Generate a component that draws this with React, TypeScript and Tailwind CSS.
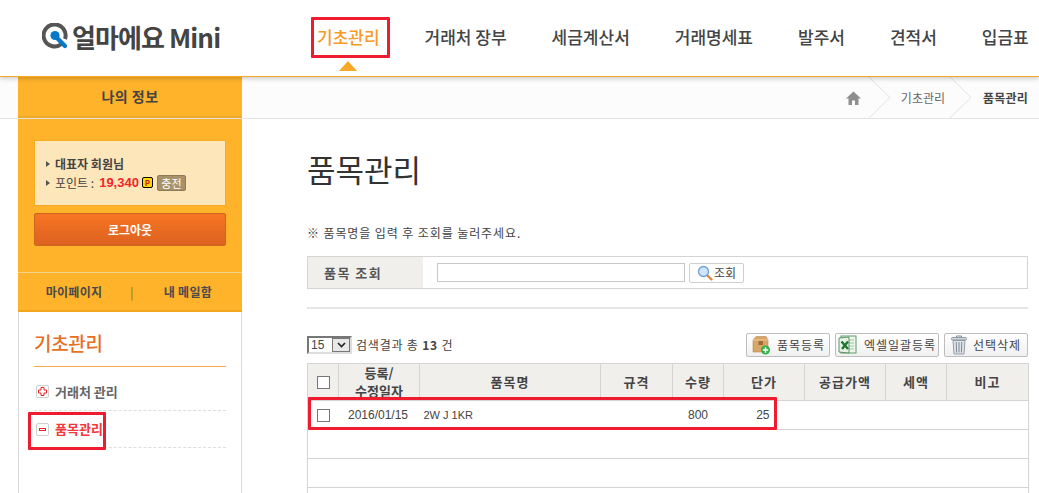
import React from 'react';

const navItems = ['거래처 장부', '세금계산서', '거래명세표', '발주서', '견적서', '입금표'];

const Chevron: React.FC = () => (
  <svg width="23" height="41" viewBox="0 0 23 41" className="shrink-0">
    <path d="M1 0 L22 20.5 L1 41" fill="none" stroke="#e2e2e2" strokeWidth="1" />
  </svg>
);

const Arrow: React.FC = () => (
  <span className="mr-[5px] inline-block h-0 w-0 border-y-[3px] border-l-[4px] border-y-transparent border-l-[#555]" />
);

const PackageIcon: React.FC = () => (
  <svg width="20" height="20" viewBox="0 0 20 20" className="shrink-0">
    <path d="M2 5 L5 1.5 H15 L17 5 V17 H2 Z" fill="#d9a566" stroke="#b98a50" strokeWidth="0.6" />
    <path d="M2 5 H17" stroke="#efc894" strokeWidth="1" />
    <rect x="7.5" y="6" width="4.5" height="4" fill="#9b6d3a" />
    <circle cx="14.5" cy="15" r="4.5" fill="#2fb344" />
    <path d="M14.5 12.3 V17.7 M11.8 15 H17.2" stroke="#fff" strokeWidth="1.6" />
  </svg>
);

const ExcelIcon: React.FC = () => (
  <svg width="20" height="20" viewBox="0 0 20 20" className="shrink-0">
    <rect x="3" y="1" width="15" height="17" fill="#eef6ee" stroke="#5f9c6a" />
    <path d="M10 5 H16 M10 8 H16 M10 11 H16 M10 14 H16" stroke="#9cc6a4" strokeWidth="1" />
    <path d="M1 3 L11 2 V18 L1 17 Z" fill="#e9f2e6" stroke="#3f7f45" strokeWidth="0.8" />
    <path d="M3.5 6.5 L10 14 M10 6.5 L4 14" stroke="#1f7a2e" strokeWidth="2.4" />
  </svg>
);

const TrashIcon: React.FC = () => (
  <svg width="16" height="20" viewBox="0 0 16 20" className="shrink-0">
    <path d="M5.5 2 V1 H10.5 V2" fill="none" stroke="#7d8894" strokeWidth="1" />
    <rect x="0.5" y="2.5" width="15" height="2.5" rx="1" fill="#cfd6dc" stroke="#7d8894" strokeWidth="0.8" />
    <path d="M2 5.5 H14 L13 19 H3 Z" fill="#dfe4e8" stroke="#7d8894" strokeWidth="0.8" />
    <path d="M5.2 7 L5.6 17.5 M8 7 V17.5 M10.8 7 L10.4 17.5" stroke="#7d8894" strokeWidth="1" />
  </svg>
);

const SearchIcon: React.FC = () => (
  <svg width="16" height="16" viewBox="0 0 16 16" className="shrink-0">
    <path d="M9.5 9.5 L14.5 14.5" stroke="#d9893a" strokeWidth="2.4" strokeLinecap="round" />
    <circle cx="6.5" cy="6.5" r="5" fill="#cfe5fa" stroke="#6f9fd0" strokeWidth="1.3" />
  </svg>
);

const LogoIcon: React.FC = () => (
  <svg width="27" height="27" viewBox="0 0 27 27" className="shrink-0">
    <path d="M19.5 21 A11 11 0 1 1 23 16" fill="none" stroke="#555" strokeWidth="4" />
    <circle cx="13" cy="12.5" r="4.6" fill="#0a78c8" />
    <path d="M16 16 L23 23" stroke="#0a78c8" strokeWidth="4.4" strokeLinecap="round" />
  </svg>
);

const ActionButton: React.FC<{ icon: React.ReactNode; label: string; width: string }> = ({ icon, label, width }) => (
  <button className={`flex h-[24px] items-center justify-center gap-[6px] rounded-[2px] border border-[#bdbdbd] bg-gradient-to-b from-white to-[#f0f0f0] text-[12px] tracking-[1px] text-[#444] ${width}`}>
    {icon}
    {label}
  </button>
);

const Sidebar: React.FC = () => (
  <aside className="flex w-[224px] shrink-0 flex-col">
    <div className="flex h-[153px] flex-col bg-[#ffb32a] px-[16px] pt-[21px]">
      <div className="flex h-[66px] flex-col justify-center gap-[1px] border border-[#f6ab23] bg-[#fee6bb] px-[11px] text-[12px] leading-[18px] text-[#444]">
        <div className="flex items-center font-bold">
          <Arrow />
          대표자 회원님
        </div>
        <div className="flex items-center">
          <Arrow />
          포인트 :
          <span className="ml-[5px] font-['Liberation_Sans',sans-serif] text-[13px] font-bold text-[#f0282d]">19,340</span>
          <span className="ml-[3px] flex h-[11px] w-[11px] items-center justify-center rounded-[2px] border border-black bg-[#ffd800] text-[8px] font-bold leading-none text-[#d02020]">P</span>
          <span className="ml-[4px] flex h-[16px] w-[29px] items-center justify-center rounded-[2px] border border-[#8d7a58] bg-[#a8926c] text-[11px] text-white">충전</span>
        </div>
      </div>
      <button className="mt-[7px] h-[33px] shrink-0 rounded-[2px] border border-[#cf6420] bg-gradient-to-b from-[#f87524] to-[#dc6220] text-[12px] font-bold text-white">
        로그아웃
      </button>
    </div>
    <div className="flex h-[40px] shrink-0 items-center border-t border-t-[#f3d28a] border-b-[2px] border-b-[#f2a51f] bg-[#ffb32a] text-[12px] font-bold tracking-[0.3px] text-[#4a4a4a]">
      <span className="w-[112px] text-center">마이페이지</span>
      <span className="text-[#a98436]">|</span>
      <span className="flex-1 text-center">내 메일함</span>
    </div>
    <div className="flex flex-1 flex-col border-x border-[#d9d9d9] bg-white px-[15px] pt-[16px]">
      <h2 className="border-b border-[#f6a84a] pb-[8px] text-[19px] leading-[30px] font-medium tracking-[-0.3px] text-[#e5701f]">기초관리</h2>
      <div className="flex h-[44px] items-center gap-[6px] border-b border-dashed border-[#dedede] pl-[2px] pt-[6px] text-[13px] font-bold text-[#666]">
        <span className="flex h-[13px] w-[13px] items-center justify-center rounded-[2px] border border-[#cfcfcf]">
          <svg width="9" height="9" viewBox="0 0 9 9">
            <path d="M3 0.5 H6 V3 H8.5 V6 H6 V8.5 H3 V6 H0.5 V3 H3 Z" fill="none" stroke="#e8232a" strokeWidth="1" />
          </svg>
        </span>
        거래처 관리
      </div>
      <div className="flex h-[37px] items-center gap-[6px] border-b border-dashed border-[#dedede] pl-[2px] text-[13px] font-bold text-[#f0383d]">
        <span className="flex h-[13px] w-[13px] items-center justify-center rounded-[2px] border border-[#cfcfcf]">
          <span className="h-[3px] w-[7px] border border-[#e8232a]" />
        </span>
        품목관리
      </div>
    </div>
  </aside>
);

const DataTable: React.FC = () => {
  const headers = ['등록/', '품목명', '규격', '수량', '단가', '공급가액', '세액', '비고'];
  return (
    <table className="w-[721px] table-fixed border-collapse text-[12px] text-[#444]">
      <colgroup>
        <col className="w-[31px]" />
        <col className="w-[81px]" />
        <col className="w-[181px]" />
        <col className="w-[72px]" />
        <col className="w-[51px]" />
        <col className="w-[81px]" />
        <col className="w-[81px]" />
        <col className="w-[61px]" />
        <col className="w-[82px]" />
      </colgroup>
      <thead>
        <tr className="h-[37px] bg-[#f0efec] text-[13px] font-bold text-[#444]">
          <th className="border border-[#d4d4d4]">
            <span className="mx-auto block h-[13px] w-[13px] border border-[#777] bg-white" />
          </th>
          <th className="border border-[#d4d4d4] text-[13px] leading-[18px] font-bold">
            {headers[0]}
            <br />
            수정일자
          </th>
          {headers.slice(1).map((h) => (
            <th key={h} className="border border-[#d4d4d4] font-bold tracking-[1px]">{h}</th>
          ))}
        </tr>
      </thead>
      <tbody>
        <tr className="h-[29px]">
          <td className="border-y border-l border-[#d4d4d4]">
            <span className="mx-auto block h-[13px] w-[13px] border border-[#777] bg-white" />
          </td>
          <td className="border-y border-[#d4d4d4] pr-[2px] text-center font-['Liberation_Sans',sans-serif]">2016/01/15</td>
          <td className="border-y border-[#d4d4d4] pl-[4px] font-['Liberation_Sans',sans-serif] text-[11px]">2W J 1KR</td>
          <td className="border-y border-[#d4d4d4]" />
          <td className="border-y border-[#d4d4d4] text-center font-['Liberation_Sans',sans-serif]">800</td>
          <td className="border-y border-[#d4d4d4] pr-[35px] text-right font-['Liberation_Sans',sans-serif]">25</td>
          <td className="border-y border-[#d4d4d4]" />
          <td className="border-y border-[#d4d4d4]" />
          <td className="border-y border-r border-[#d4d4d4]" />
        </tr>
        {[0, 1, 2].map((r) => (
          <tr key={r} className="h-[29px]">
            <td colSpan={9} className="border border-[#d4d4d4]" />
          </tr>
        ))}
      </tbody>
    </table>
  );
};

const App: React.FC = () => {
  return (
    <div className="relative h-[493px] w-[1039px] overflow-hidden bg-white font-['Noto_Sans_CJK_KR','Noto_Sans',sans-serif] text-[#444]">
      <header className="relative z-10 flex h-[77px] items-center border-b border-[#f9a825] bg-white shadow-[0_2px_4px_rgba(0,0,0,0.18)]">
        <div className="flex w-[317px] items-center gap-[3px] pl-[42px] pb-[3px]">
          <LogoIcon />
          <span className="text-[26px] leading-none font-bold tracking-[-0.9px] whitespace-nowrap text-[#444]">얼마에요 Mini</span>
        </div>
        <nav className="flex items-center gap-[45px] pb-[3px] text-[17px] font-medium whitespace-nowrap text-[#444]">
          <span className="relative text-[#f89a2a]">
            기초관리
            <span className="absolute top-[37px] left-[22px] h-0 w-0 border-x-[9px] border-b-[10px] border-x-transparent border-b-[#f9a825]" />
          </span>
          {navItems.map((item) => (
            <span key={item}>{item}</span>
          ))}
        </nav>
      </header>

      <div className="flex h-[42px] border-b border-[#e3e3e3] bg-[#fcfcfc]">
        <div className="w-[18px]" />
        <div className="flex w-[224px] items-center justify-center border-b-[2px] border-[#eda828] bg-[#ffb32a] text-[14px] font-bold tracking-[0.5px] text-[#444]">
          나의 정보
        </div>
        <div className="flex flex-1 items-center justify-end pr-[11px] text-[12px]">
          <svg width="15" height="14" viewBox="0 0 15 14" className="mr-[7px] shrink-0">
            <path d="M7.5 0.5 L15 7.5 H12.5 V14 H9 V9.5 H6 V14 H2.5 V7.5 H0 Z" fill="#8f8f8f" />
          </svg>
          <Chevron />
          <span className="mr-[4px] ml-[10px] text-[#666]">기초관리</span>
          <Chevron />
          <span className="ml-[11px] font-bold tracking-[0.2px] text-[#444]">품목관리</span>
        </div>
      </div>

      <div className="flex pl-[18px]">
        <Sidebar />
        <main className="flex flex-1 flex-col pt-[28px] pl-[65px]">
          <h1 className="text-[31px] leading-[44px] font-normal text-[#333]">품목관리</h1>
          <p className="mt-[33px] text-[12px] leading-[18px] tracking-[0.9px] text-[#444]">※ 품목명을 입력 후 조회를 눌러주세요.</p>
          <div className="mt-[14px] flex h-[33px] w-[721px] items-center border border-[#d4d4d4]">
            <div className="flex h-full w-[115px] items-center bg-[#f0efec] pl-[16px] text-[13px] font-bold tracking-[1.5px] text-[#555]">
              품목 조회
            </div>
            <input className="ml-[14px] h-[19px] w-[248px] border border-[#c8c8c8] bg-white" />
            <button className="ml-[4px] flex h-[20px] w-[55px] items-center justify-center gap-[1px] rounded-[2px] border border-[#cfcfcf] bg-white text-[12px] text-[#444]">
              <SearchIcon />
              조회
            </button>
          </div>
          <div className="mt-[18px] h-[2px] w-[721px] bg-[#e5e5e5]" />
          <div className="mt-[24px] flex h-[24px] w-[721px] items-center">
            <div className="flex h-[18px] w-[45px] items-center border-2 border-t-[#777] border-r-[#ddd] border-b-[#ddd] border-l-[#777] bg-white text-[12px]">
              <span className="flex-1 pl-[2px] font-['Liberation_Sans',sans-serif]">15</span>
              <span className="flex h-[14px] w-[18px] items-center justify-center border border-[#777] bg-[#e8e8e8]">
                <svg width="9" height="6" viewBox="0 0 9 6">
                  <path d="M1 1 L4.5 4.5 L8 1" fill="none" stroke="#222" strokeWidth="1.6" />
                </svg>
              </span>
            </div>
            <span className="ml-[4px] text-[12px] tracking-[0.8px] text-[#444]">
              검색결과 총 <b>13</b> 건
            </span>
            <div className="ml-auto flex gap-[5px]">
              <ActionButton icon={<PackageIcon />} label="품목등록" width="w-[84px]" />
              <ActionButton icon={<ExcelIcon />} label="엑셀일괄등록" width="w-[104px]" />
              <ActionButton icon={<TrashIcon />} label="선택삭제" width="w-[84px]" />
            </div>
          </div>
          <div className="mt-[6px]">
            <DataTable />
          </div>
        </main>
      </div>

      {/* red annotation boxes on top of the page */}
      <div className="absolute top-[17px] left-[311px] z-20 h-[41px] w-[79px] rounded-[1px] border-[3px] border-[#ee1c2e]" />
      <div className="absolute top-[412px] left-[28px] z-20 h-[38px] w-[78px] rounded-[1px] border-[3px] border-[#ee1c2e]" />
      <div className="absolute top-[397px] left-[308px] z-20 h-[33px] w-[469px] rounded-[1px] border-[3px] border-[#ee1c2e]" />
    </div>
  );
};

export default App;
